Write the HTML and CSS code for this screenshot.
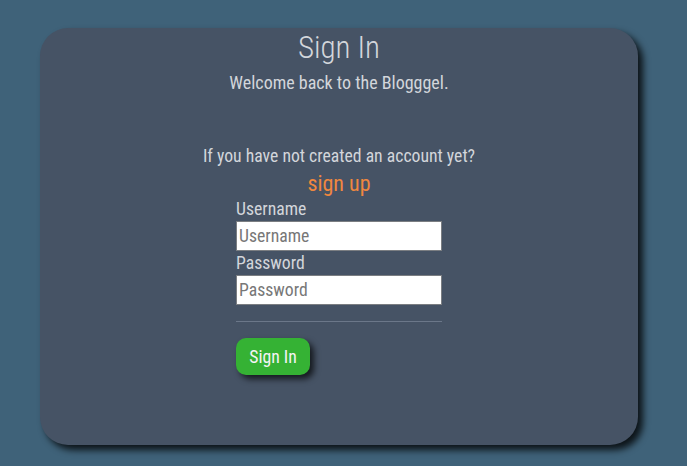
FILE: index.html
```html
<!DOCTYPE html>
<html>
<head>
<meta charset="utf-8">
<link rel="stylesheet" href="styles.css">
</head>
<body>
<div class="card">
  <h1 class="title">Sign In</h1>
  <p class="welcome">Welcome back to the Blogggel.</p>
  <p class="hint">If you have not created an account yet?</p>
  <a class="signup" href="#">sign up</a>
  <form class="form">
    <label class="label" for="u">Username</label>
    <input class="input" id="u" type="text" placeholder="Username">
    <label class="label" for="p">Password</label>
    <input class="input" id="p" type="password" placeholder="Password">
    <hr class="rule">
    <button class="btn" type="button">Sign In</button>
  </form>
</div>
</body>
</html>
```
FILE: styles.css
```css
html, body {
  margin: 0;
  padding: 0;
}
body {
  background: #3f6279;
  font-family: "Roboto Condensed", "Liberation Sans Narrow", sans-serif;
  font-stretch: condensed;
  font-weight: 400;
  color: #d3d6db;
  height: 466px;
  overflow: hidden;
}
.card {
  margin: 28px 0 0 40px;
  width: 598px;
  height: 417px;
  background: #465365;
  border-radius: 28px;
  box-shadow: 5px 5px 7px rgba(0, 0, 0, 0.8);
  display: flex;
  flex-direction: column;
  align-items: center;
  box-sizing: border-box;
}
.title {
  margin: 2px 0 0;
  font-weight: 300;
  font-size: 31px;
  line-height: 36px;
}
.welcome {
  margin: 6px 0 0;
  font-size: 18px;
  line-height: 22px;
}
.hint {
  margin: 51px 0 0;
  font-size: 17.7px;
  line-height: 22px;
}
.signup {
  margin-top: 4px;
  color: #f0873f;
  text-decoration: none;
  font-size: 22px;
  line-height: 26px;
}
.form {
  width: 206px;
  display: flex;
  flex-direction: column;
  margin-top: 1px;
}
.label {
  font-size: 17.7px;
  line-height: 22px;
}
.input {
  width: 206px;
  height: 30px;
  box-sizing: border-box;
  border: 1px solid #7b7e82;
  background: #fff;
  font-family: inherit;
  font-stretch: condensed;
  font-size: 17.7px;
  padding: 0 2px;
  margin: 1px 0 1px;
  color: #333;
}
.input::placeholder {
  color: #777;
}
.rule {
  width: 206px;
  margin: 15px 0 0;
  border: 0;
  border-top: 1px solid #6b7789;
}
.btn {
  margin-top: 16px;
  align-self: flex-start;
  width: 74px;
  height: 37px;
  padding: 0;
  background: #35b234;
  color: #f4f4f4;
  border: 0;
  border-radius: 10px;
  font-family: inherit;
  font-stretch: condensed;
  font-size: 17.7px;
  box-shadow: 4px 4px 6px rgba(0, 0, 0, 0.7);
  cursor: pointer;
}
```
